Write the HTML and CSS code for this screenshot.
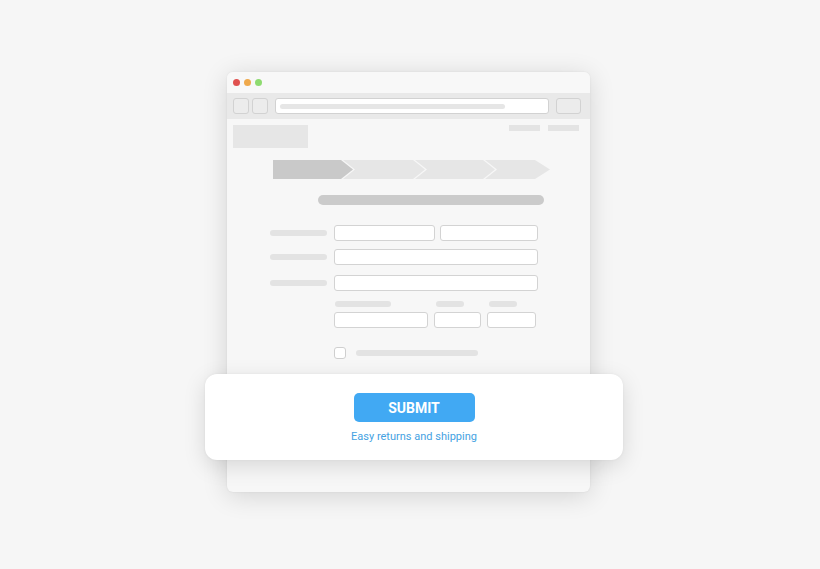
FILE: index.html
```html
<!DOCTYPE html>
<html>
<head>
<meta charset="utf-8">
<link rel="stylesheet" href="styles.css">
</head>
<body>
<div class="stage">
  <div class="window">
    <div class="titlebar">
      <span class="dot red"></span><span class="dot orange"></span><span class="dot green"></span>
    </div>
    <div class="toolbar">
      <span class="tbtn"></span>
      <span class="tbtn"></span>
      <div class="url"><span class="url-bar"></span></div>
      <span class="tbtn wide"></span>
    </div>
    <div class="content">
      <div class="header">
        <div class="logo"></div>
        <div class="nav"><span class="ph"></span><span class="ph"></span></div>
      </div>
      <svg class="steps" width="278" height="19" viewBox="0 0 278 19">
        <path d="M0 0H68L80 9.5L68 19H0Z" fill="#c9c9c9"/>
        <path d="M70 0H140L152 9.5L140 19H70L82 9.5Z" fill="#e6e6e6"/>
        <path d="M142 0H210L222 9.5L210 19H142L154 9.5Z" fill="#e6e6e6"/>
        <path d="M212 0H262L277 9.5L262 19H212L224 9.5Z" fill="#e6e6e6"/>
      </svg>
      <div class="progress"></div>
      <div class="form">
        <div class="row r1">
          <span class="label"></span>
          <span class="input" style="width:101px"></span>
          <span class="input" style="width:98px"></span>
        </div>
        <div class="row r2">
          <span class="label"></span>
          <span class="input full"></span>
        </div>
        <div class="row r3">
          <span class="label"></span>
          <span class="input full"></span>
        </div>
        <div class="row r4">
          <div class="field"><span class="sublabel" style="width:56px"></span><span class="input" style="width:94px"></span></div>
          <div class="field"><span class="sublabel shifted" style="width:28px"></span><span class="input" style="width:47px"></span></div>
          <div class="field"><span class="sublabel shifted" style="width:28px"></span><span class="input" style="width:49px"></span></div>
        </div>
        <div class="row check">
          <span class="box"></span><span class="check-bar"></span>
        </div>
      </div>
    </div>
    <div class="card">
      <button class="submit">SUBMIT</button>
      <p class="note">Easy returns and shipping</p>
    </div>
  </div>
</div>
</body>
</html>
```

FILE: styles.css
```css
* { box-sizing: border-box; }
html, body { margin: 0; padding: 0; }
body {
  background: #f6f6f6;
  font-family: Roboto, "Liberation Sans", sans-serif;
  width: 820px;
  height: 569px;
  overflow: hidden;
}
.stage {
  padding: 72px 0 0 227px;
}
.window {
  position: relative;
  width: 363px;
  height: 420px;
  border-radius: 6px;
  background: #f7f7f7;
  box-shadow: 0 4px 26px rgba(0,0,0,0.14), 0 0 2px rgba(0,0,0,0.08);
  display: flex;
  flex-direction: column;
}
.titlebar {
  height: 21px;
  display: flex;
  align-items: center;
  gap: 4px;
  padding-left: 6px;
  background: #f8f8f8;
  border-radius: 6px 6px 0 0;
}
.dot { width: 7px; height: 7px; border-radius: 50%; }
.red { background: #e0514f; }
.orange { background: #efa94c; }
.green { background: #8edb70; }
.toolbar {
  height: 26px;
  background: #e9e9e9;
  display: flex;
  align-items: center;
  padding: 0 9px 0 6px;
}
.tbtn {
  width: 16px;
  height: 16px;
  border: 1px solid #d2d2d2;
  border-radius: 3px;
  background: #ececec;
  margin-right: 3px;
}
.tbtn.wide { width: 25px; margin: 0 0 0 7px; }
.url {
  margin-left: 4px;
  width: 274px;
  height: 16px;
  border: 1px solid #d2d2d2;
  border-radius: 3px;
  background: #fff;
  display: flex;
  align-items: center;
  padding-left: 4px;
}
.url-bar {
  width: 225px;
  height: 5px;
  border-radius: 3px;
  background: #e6e6e6;
}
.content {
  flex: 1;
  padding: 6px 11px 0 6px;
}
.header {
  display: flex;
  justify-content: space-between;
  align-items: flex-start;
}
.logo { width: 75px; height: 23px; background: #e6e6e6; }
.nav { display: flex; gap: 8px; }
.ph { width: 31px; height: 6px; background: #e4e4e4; }
.steps { display: block; margin: 12px 0 0 40px; }
.progress {
  margin: 16px 0 0 85px;
  width: 226px;
  height: 10px;
  border-radius: 5px;
  background: #cbcbcb;
}
.form { margin: 20px 0 0 37px; }
.row { display: flex; align-items: center; }
.label {
  width: 57px;
  height: 6px;
  border-radius: 3px;
  background: #e3e3e3;
  margin-right: 7px;
}
.input {
  display: block;
  height: 16px;
  border: 1.5px solid #d3d3d3;
  border-radius: 3px;
  background: #fff;
}
.r1 .input + .input { margin-left: 5px; }
.input.full { width: 204px; }
.r2 { margin-top: 8px; }
.r3 { margin-top: 10px; }
.r4 { margin-top: 10px; margin-left: 64px; align-items: flex-start; gap: 6px; }
.field { display: flex; flex-direction: column; gap: 5px; }
.sublabel {
  display: block;
  height: 6px;
  border-radius: 3px;
  background: #e3e3e3;
  margin-left: 1px;
}
.sublabel.shifted { margin-left: 2px; }
.check { margin-top: 19px; margin-left: 64px; }
.box {
  width: 12px;
  height: 12px;
  border: 1.5px solid #cfcfcf;
  border-radius: 3px;
  background: #fff;
}
.check-bar {
  margin-left: 10px;
  width: 122px;
  height: 6px;
  border-radius: 3px;
  background: #e3e3e3;
}
.card {
  position: absolute;
  left: -22px;
  top: 302px;
  width: 418px;
  height: 86px;
  border-radius: 12px;
  background: #fff;
  box-shadow: 0 6px 22px rgba(0,0,0,0.13), 0 0 3px rgba(0,0,0,0.05);
  display: flex;
  flex-direction: column;
  align-items: center;
  padding-top: 19px;
}
.submit {
  width: 121px;
  height: 29px;
  border: 0;
  border-radius: 5px;
  background: #41a9f3;
  color: #fff;
  font-family: Roboto, "Liberation Sans", sans-serif;
  font-weight: 700;
  font-size: 14px;
  padding: 0;
}
.note {
  margin: 8px 0 0;
  font-size: 11px;
  line-height: 13px;
  color: #45a2e2;
}
```
